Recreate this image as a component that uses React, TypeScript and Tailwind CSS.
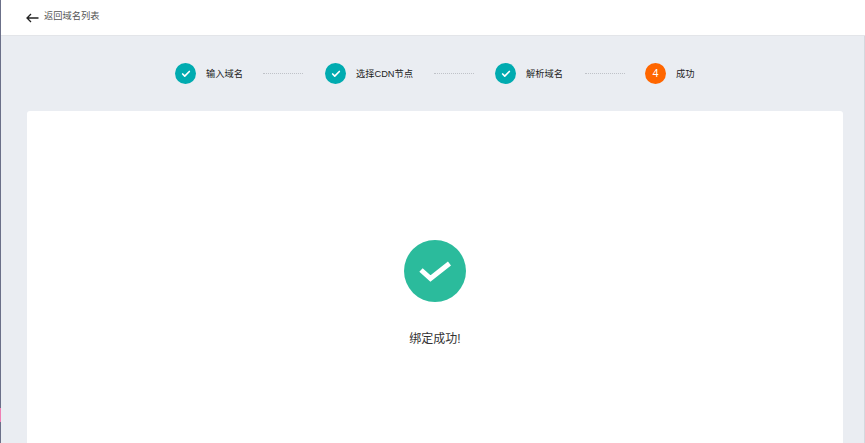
import { Check } from 'lucide-react';

const font = "font-['Liberation_Sans','Noto_Sans_CJK_SC',sans-serif]";

function Connector({ className = 'mr-5' }: { className?: string }) {
  return <div className={`ml-5 w-10 border-t border-dotted border-[#bfc2c8] ${className}`} />;
}

function Step({ label, num, width }: { label: string; num?: string; width: string }) {
  return (
    <div className={`flex items-center ${width}`}>
      <div
        className={`flex h-[21px] w-[21px] shrink-0 items-center justify-center rounded-full text-[11px] text-white ${
          num ? 'bg-[#ff6600]' : 'bg-[#00abb0]'
        }`}
      >
        {num ?? <Check size={10} strokeWidth={4} />}
      </div>
      <span className="ml-[10px] mt-[2px] whitespace-nowrap text-[9.25px] leading-none text-[#222]">{label}</span>
    </div>
  );
}

export default function App() {
  return (
    <div className={`flex h-[443px] w-[865px] overflow-hidden bg-white ${font}`}>
      {/* window edge on the left */}
      <div className="flex h-full w-px shrink-0 flex-col bg-[#6b7089]">
        <div className="h-[408px]" />
        <div className="h-[14px] bg-[#ef7fb4]" />
      </div>

      <div className="flex min-w-0 flex-1 flex-col">
        <div className="flex h-[36px] shrink-0 items-center border-b border-[#e3e5e9] bg-white pl-[25px]">
          <svg width="13" height="10" viewBox="0 0 13 10" fill="none" stroke="#222" strokeWidth="1.3" className="mt-[1px]">
            <path d="M1 5H12.5M5 1L1 5L5 9" />
          </svg>
          <span className="ml-[5px] mb-[1px] text-[9.25px] leading-none text-[#555]">返回域名列表</span>
        </div>

        <div className="flex flex-1 flex-col border-r border-[#d5d8de] bg-[#eaedf2] pl-[26px] pr-[21px] pt-[27px]">
          <div className="flex h-[21px] items-center pl-[148px]">
            <Step label="输入域名" width="w-[68px]" />
            <Connector className="mr-[22px]" />
            <Step label="选择CDN节点" width="w-[89px]" />
            <Connector className="mr-[21px]" />
            <Step label="解析域名" width="w-[70px]" />
            <Connector />
            <Step label="成功" num="4" width="w-[68px]" />
          </div>

          <div className="mt-[27px] flex flex-1 flex-col items-center rounded-t-[3px] bg-white pt-[129px]">
            <div className="flex h-[62px] w-[62px] items-center justify-center rounded-full bg-[#2bbb9c]">
              <svg width="32" height="24" viewBox="0 0 32 24" fill="none" stroke="white" strokeWidth="5" className="mt-[1px]">
                <path d="M2 10L11.5 18.5L30.5 3.5" />
              </svg>
            </div>
            <p className="mt-[31px] text-[12px] leading-none text-[#333]">绑定成功!</p>
          </div>
        </div>
      </div>
    </div>
  );
}
